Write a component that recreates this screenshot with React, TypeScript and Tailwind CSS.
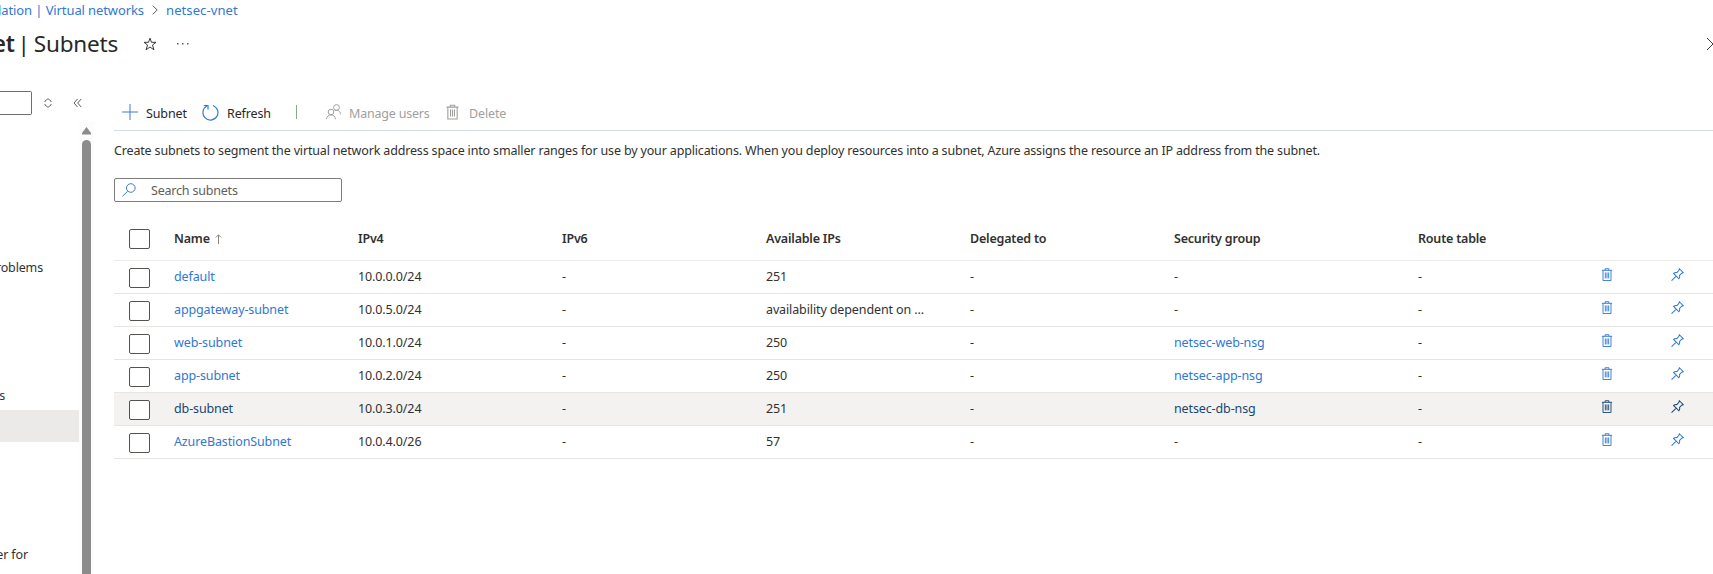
import React from "react";

type Subnet = {
  name: string;
  ipv4: string;
  available: string;
  group: string;
  hovered?: boolean;
};

const subnets: Subnet[] = [
  { name: "default", ipv4: "10.0.0.0/24", available: "251", group: "-" },
  { name: "appgateway-subnet", ipv4: "10.0.5.0/24", available: "availability dependent on ...", group: "-" },
  { name: "web-subnet", ipv4: "10.0.1.0/24", available: "250", group: "netsec-web-nsg" },
  { name: "app-subnet", ipv4: "10.0.2.0/24", available: "250", group: "netsec-app-nsg" },
  { name: "db-subnet", ipv4: "10.0.3.0/24", available: "251", group: "netsec-db-nsg", hovered: true },
  { name: "AzureBastionSubnet", ipv4: "10.0.4.0/26", available: "57", group: "-" },
];

const columns =
  "grid grid-cols-[60px_184px_204px_204px_204px_204px_244px_183px_70px_1fr] items-center";

type IconProps = { className?: string };

function TrashIcon({ className }: IconProps) {
  return (
    <svg viewBox="0 0 12 14" fill="none" stroke="currentColor" className={className}>
      <path d="M0.5 2.5h11M4 2.5V0.8h4v1.7M1.7 2.5v11h8.6v-11M4.2 4.8v6.4M6 4.8v6.4M7.8 4.8v6.4" />
    </svg>
  );
}

function PinIcon({ className }: IconProps) {
  return (
    <svg viewBox="0 0 14 14" fill="none" stroke="currentColor" strokeWidth="1.1" className={className}>
      <path d="M9 .8L13.200 5l-1.600.6-2.400 2.400c.4 1.500.1 2.600-.7 3.600L2.800 5.900C3.800 5 4.900 4.700 6.300 5L8.500 2.500zM5.600 8.700L.6 13.500" />
    </svg>
  );
}

function UsersIcon({ className }: IconProps) {
  return (
    <svg viewBox="0 0 15 16" fill="none" stroke="currentColor" className={className}>
      <circle cx="5" cy="8" r="2.800" />
      <circle cx="10.500" cy="3.500" r="2.900" />
      <path d="M.6 15.200c0-2.600 1.900-4.300 4.400-4.300s4.400 1.700 4.400 4.300M8.800 6.500c3-1 5.500.5 5.700 3.800" />
    </svg>
  );
}

function Checkbox() {
  return <span className="block h-5 w-[21px] rounded-[2px] border border-[#55534f] bg-white" />;
}

function Toolbar() {
  return (
    <div className="flex h-[52px] items-center whitespace-nowrap border-b border-[#d6dde6] pt-[15px] text-[#292827]">
      <svg viewBox="0 0 16 16" className="ml-2 h-4 w-4 text-[#3a7bd5]" fill="none" stroke="currentColor">
        <path d="M8 0v16M0 8h16" />
      </svg>
      <span className="ml-2 w-[41px] pt-1">Subnet</span>
      <svg viewBox="0 0 17 17" className="ml-[15px] h-[17px] w-[17px] text-[#2f7bdc]" fill="none" stroke="currentColor" strokeWidth="1.200">
        <path d="M11 1.500a7.500 7.500 0 1 1-6.200.5M1.800 1.500h4.200v4" />
      </svg>
      <span className="ml-2 w-[42px] pt-1">Refresh</span>
      <span className="ml-[27px] h-[14px] w-px bg-[#87a88c]" />
      <UsersIcon className="ml-[29px] h-4 w-[15px] text-[#a19f9d]" />
      <span className="ml-2 w-20 pt-1 tracking-[-0.2px] text-[#a19f9d]">Manage users</span>
      <TrashIcon className="ml-[17px] h-4 w-[13px] text-[#a19f9d]" />
      <span className="ml-2.5 pt-1 text-[#a19f9d]">Delete</span>
    </div>
  );
}

function SubnetTable() {
  return (
    <div className="mt-[14px]">
      <div className={`${columns} h-[45px] border-b border-[#edebe9] pt-0.5 font-semibold tracking-[-0.2px] text-[#323130]`}>
        <span className="pl-[15px]"><Checkbox /></span>
        <span className="flex items-center">
          Name
          <svg viewBox="0 0 7 10" className="ml-[5px] h-2.5 w-[7px] text-[#8a8886]" fill="none" stroke="currentColor">
            <path d="M3.500 10V.8M.8 3.500L3.500.8l2.700 2.700" />
          </svg>
        </span>
        <span>IPv4</span>
        <span>IPv6</span>
        <span>Available IPs</span>
        <span>Delegated to</span>
        <span>Security group</span>
        <span>Route table</span>
      </div>
      {subnets.map((s) => {
        const link = s.hovered ? "text-[#1b4673]" : "text-[#2f78d4]";
        return (
          <div
            key={s.name}
            className={`${columns} h-[33px] border-b border-[#e6e5e4] ${s.hovered ? "bg-[#f3f2f1]" : ""}`}
          >
            <span className="pl-[15px] pt-0.5"><Checkbox /></span>
            <span className={link}>{s.name}</span>
            <span>{s.ipv4}</span>
            <span>-</span>
            <span className="whitespace-nowrap">{s.available}</span>
            <span>-</span>
            <span className={s.group === "-" ? "" : link}>{s.group}</span>
            <span>-</span>
            <TrashIcon className={`-mt-[5px] h-[13px] w-3 ${link}`} />
            <PinIcon className={`-mt-[5px] h-[13px] w-[13px] ${link}`} />
          </div>
        );
      })}
    </div>
  );
}

function Sidebar() {
  return (
    <aside className="flex w-[94px] shrink-0 flex-col">
      <div className="flex h-[43px] items-center pt-[5px]">
        <span className="h-6 w-8 rounded-r-[2px] border border-l-0 border-[#706e6c]" />
        <svg viewBox="0 0 8 10" className="ml-3 h-2.5 w-2" fill="none" stroke="#706e6c">
          <path d="M1 4V3l3-2.300L7 3v1M1 6v1l3 2.300L7 7V6" />
        </svg>
        <svg viewBox="0 0 9 10" className="ml-[21px] h-[10px] w-[9px]" fill="none" stroke="#605e5c">
          <path d="M4.500 1L1 5l3.500 4M8.200 1L4.700 5l3.500 4" />
        </svg>
      </div>
      <div className="flex flex-1">
        <nav className="flex w-[79px] flex-col">
          <span className="mt-[129px] flex h-8 w-[43px] items-center justify-end pt-0.5 tracking-[-0.15px]">roblems</span>
          <span className="mt-24 flex h-[31px] w-[5px] items-center justify-end pt-0.5">s</span>
          <span className="h-8 bg-[#ebeae9]" />
          <span className="mt-24 flex h-8 w-7 items-center justify-end whitespace-nowrap pt-0.5">er for</span>
        </nav>
        <div className="flex flex-1 flex-col items-center bg-[#fcfcfc] pt-[5px]">
          <svg viewBox="0 0 9 8" className="h-2 w-[9px]" fill="#8b8b8b">
            <path d="M4.500 0L9 6v1.500H0V6z" />
          </svg>
          <span className="mt-[5px] w-[9px] flex-1 rounded-t-full bg-[#8b8b8b]" />
        </div>
      </div>
    </aside>
  );
}

export default function App() {
  return (
    <div className="flex h-[574px] w-full flex-col overflow-hidden bg-white font-['Noto_Sans',sans-serif] text-[12.5px] leading-[18px] tracking-[-0.12px] text-[#323130]">
      <div className="flex h-5 items-center text-[13px] tracking-[0.1px] text-[#2f78d4]">
        <span className="flex w-36 justify-end whitespace-nowrap tracking-[-0.1px]">lation | Virtual networks</span>
        <svg viewBox="0 0 6 10" className="ml-2 h-2.5 w-1.5" fill="none" stroke="#605e5c">
          <path d="M.7.7L5.200 5 .7 9.300" />
        </svg>
        <span className="ml-2">netsec-vnet</span>
      </div>
      <header className="flex h-[59px] items-start text-[22.5px] leading-8 tracking-[-0.2px] text-[#292827]">
        <h1 className="mt-2 flex w-[118px] justify-end whitespace-pre">
          <span className="font-semibold">et</span>
          <span className="ml-[3px]">|</span>
          <span className="ml-[4px]">Subnets</span>
        </h1>
        <svg viewBox="0 0 14 14" className="ml-[25px] mt-[17px] h-[14px] w-[14px]" fill="none" stroke="#3b3a39">
          <path d="M7 1.200l1.500 4.100h4.500L9.500 8l1.400 4.800L7 10l-3.900 2.800L4.500 8 1 5.300h4.500z" />
        </svg>
        <svg viewBox="0 0 12 2" className="ml-5 mt-[23px] h-0.5 w-3" fill="#605e5c">
          <path d="M0 0h1.500v1.500H0zM5 0h1.500v1.500H5zM10 0h1.500v1.500H10z" />
        </svg>
        <svg viewBox="0 0 6 14" className="ml-auto mt-[17px] h-[14px] w-1.5" fill="none" stroke="#3b3a39">
          <path d="M0 1L6 7 0 13" />
        </svg>
      </header>
      <div className="flex flex-1">
        <Sidebar />
        <main className="ml-5 flex-1">
          <Toolbar />
          <p className="mt-[11px] whitespace-nowrap tracking-[-0.16px]">
            Create subnets to segment the virtual network address space into smaller ranges for use by your applications. When you deploy resources into a subnet, Azure assigns the resource an IP address from the subnet.
          </p>
          <div className="mt-[18px] flex h-6 w-[228px] items-center rounded-[2px] border border-[#807e7c] pl-[7px] text-[#605e5c]">
            <svg viewBox="0 0 14 14" className="h-[14px] w-[14px] text-[#3a7bd5]" fill="none" stroke="currentColor">
              <circle cx="8.800" cy="5" r="4.300" />
              <path d="M5.700 8.200L.5 13.300" />
            </svg>
            <span className="ml-[15px] pt-px tracking-[-0.2px]">Search subnets</span>
          </div>
          <SubnetTable />
        </main>
      </div>
    </div>
  );
}
